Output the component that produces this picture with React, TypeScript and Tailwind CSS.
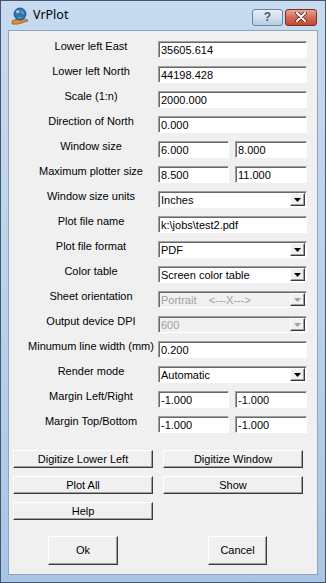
import React from 'react';

type Field =
  | { label: string; kind: 'text'; value: string }
  | { label: string; kind: 'pair'; a: string; b: string }
  | { label: string; kind: 'select'; value: string; disabled?: boolean };

const fields: Field[] = [
  { label: 'Lower left East', kind: 'text', value: '35605.614' },
  { label: 'Lower left North', kind: 'text', value: '44198.428' },
  { label: 'Scale (1:n)', kind: 'text', value: '2000.000' },
  { label: 'Direction of North', kind: 'text', value: '0.000' },
  { label: 'Window size', kind: 'pair', a: '6.000', b: '8.000' },
  { label: 'Maximum plotter size', kind: 'pair', a: '8.500', b: '11.000' },
  { label: 'Window size units', kind: 'select', value: 'Inches' },
  { label: 'Plot file name', kind: 'text', value: 'k:\\jobs\\test2.pdf' },
  { label: 'Plot file format', kind: 'select', value: 'PDF' },
  { label: 'Color table', kind: 'select', value: 'Screen color table' },
  { label: 'Sheet orientation', kind: 'select', value: 'Portrait    <---X--->', disabled: true },
  { label: 'Output device DPI', kind: 'select', value: '600', disabled: true },
  { label: 'Minumum line width (mm)', kind: 'text', value: '0.200' },
  { label: 'Render mode', kind: 'select', value: 'Automatic' },
  { label: 'Margin Left/Right', kind: 'pair', a: '-1.000', b: '-1.000' },
  { label: 'Margin Top/Bottom', kind: 'pair', a: '-1.000', b: '-1.000' },
];

const sunken =
  'h-[17px] border-t border-l border-t-[#a0a0a0] border-l-[#a0a0a0] border-b border-r border-b-white border-r-white shadow-[inset_1px_1px_0_#696969] px-[2px] pt-[2px] leading-[13px] whitespace-pre overflow-hidden';

const raised =
  'border-t border-l border-t-white border-l-white border-b border-r border-b-[#3a3a3a] border-r-[#3a3a3a] shadow-[inset_-1px_-1px_0_#a0a0a0] bg-[#f0f0f0] flex items-center justify-center';

const Box = ({ value, w }: { value: string; w: string }) => (
  <div className={`${sunken} ${w} bg-white text-black`}>{value}</div>
);

const Select = ({ value, disabled }: { value: string; disabled?: boolean }) => (
  <div className={`${sunken} w-[149px] relative ${disabled ? 'bg-[#f0f0f0] text-[#a0a0a0]' : 'bg-white text-black'}`}>
    {value}
    <div className={`${raised} absolute right-[1px] top-[1px] w-[15px] h-[13px]`}>
      <svg width="7" height="4" viewBox="0 0 7 4">
        <path d="M0 0 L7 0 L3.5 4 Z" fill={disabled ? '#a0a0a0' : '#000'} />
      </svg>
    </div>
  </div>
);

const Button = ({ label, w, h }: { label: string; w: string; h: string }) => (
  <div className={`${raised} ${w} ${h} text-black`}>{label}</div>
);

const AppIcon = () => (
  <svg width="20" height="20" viewBox="0 0 20 20">
    <path d="M2 15 Q6 12 10 14 L15 13 Q18 13 18 15 L12 17 Q7 19 2 18 Z" fill="#d98a3a" stroke="#8a4d15" strokeWidth="0.6" />
    <circle cx="10" cy="8" r="6" fill="#2f6fcf" stroke="#17407d" strokeWidth="0.8" />
    <path d="M6 5 Q8 4 9 6 Q8 8 6 8 Z M11 4 Q14 5 14 8 Q12 9 11 7 Z M8 11 Q10 10 12 12 Q10 13 8 12 Z" fill="#4fb34a" />
    <ellipse cx="8" cy="5.5" rx="2" ry="1.2" fill="#ffffff" opacity="0.5" />
  </svg>
);

export default function App() {
  return (
    <div className="w-[326px] h-[583px] flex flex-col border border-[#44566d] bg-gradient-to-b from-[#c6daf0] via-[#bcd2ec] to-[#a9c5e6] font-['Liberation_Sans',Arial,sans-serif]">
      {/* title bar */}
      <div className="h-[29px] flex items-center pl-[9px] pr-[8px] shrink-0">
        <AppIcon />
        <span className="ml-[3px] text-[12.5px] text-black font-['Noto_Sans',sans-serif]">VrPlot</span>
        <div className="ml-auto flex gap-[2px] mt-[3px]">
          <div className="w-[31px] h-[17px] rounded-[3px] border border-[#6d84a0] bg-gradient-to-b from-[#e7eef7] via-[#d2dfee] to-[#b7cbe2] flex items-center justify-center text-[12px] font-bold text-[#4a5a6e] leading-none">?</div>
          <div className="w-[32px] h-[17px] rounded-[3px] border border-[#7c2b22] bg-gradient-to-b from-[#e9a596] via-[#d26a56] to-[#c04a33] flex items-center justify-center">
            <svg width="12" height="10" viewBox="0 0 12 10">
              <path d="M2 1 L10 9 M10 1 L2 9" stroke="#5a1a12" strokeWidth="3.6" strokeLinecap="round" />
              <path d="M2 1 L10 9 M10 1 L2 9" stroke="#ffffff" strokeWidth="2.2" strokeLinecap="round" />
            </svg>
          </div>
        </div>
      </div>

      {/* client area */}
      <div className="mx-[7px] mb-[7px] flex-1 bg-[#f0f0f0] border border-[#8ea5c0] text-[11px] flex flex-col">
        <div className="pt-[10px] pl-[15px] flex flex-col gap-[8px]">
          {fields.map((f, i) => (
            <div key={i} className="flex items-start h-[17px]">
              <div className="w-[134px] text-center text-black leading-[12px] -mt-[1px] whitespace-nowrap">{f.label}</div>
              {f.kind === 'text' && <Box value={f.value} w="w-[149px]" />}
              {f.kind === 'pair' && (
                <div className="flex gap-[6px]">
                  <Box value={f.a} w="w-[71px]" />
                  <Box value={f.b} w="w-[72px]" />
                </div>
              )}
              {f.kind === 'select' && <Select value={f.value} disabled={f.disabled} />}
            </div>
          ))}
        </div>

        <div className="mt-[17px] pl-[4px] grid grid-cols-[140px_140px] gap-x-[10px] gap-y-[8px]">
          <Button label="Digitize Lower Left" w="w-[140px]" h="h-[18px]" />
          <Button label="Digitize Window" w="w-[140px]" h="h-[18px]" />
          <Button label="Plot All" w="w-[140px]" h="h-[18px]" />
          <Button label="Show" w="w-[140px]" h="h-[18px]" />
          <Button label="Help" w="w-[140px]" h="h-[18px]" />
        </div>

        <div className="mt-[16px] flex pl-[39px]">
          <Button label="Ok" w="w-[70px]" h="h-[29px]" />
          <div className="ml-[90px]">
            <Button label="Cancel" w="w-[59px]" h="h-[29px]" />
          </div>
        </div>
      </div>
    </div>
  );
}
